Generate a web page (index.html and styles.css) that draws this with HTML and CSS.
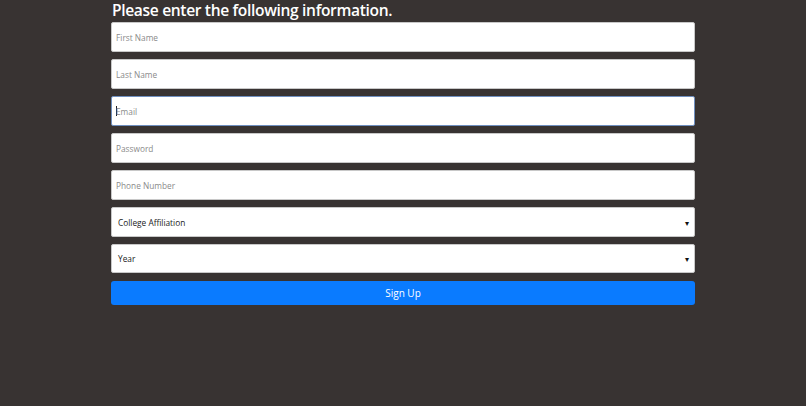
FILE: index.html
```html
<!DOCTYPE html>
<html lang="en">
<head>
<meta charset="utf-8">
<title>Sign Up</title>
<link rel="stylesheet" href="styles.css">
</head>
<body>
<main class="wrap">
  <h1 class="title">Please enter the following information.</h1>
  <form class="form">
    <div class="field"><span class="ph">First Name</span></div>
    <div class="field"><span class="ph">Last Name</span></div>
    <div class="field focused"><span class="caret"></span><span class="ph">Email</span></div>
    <div class="field"><span class="ph">Password</span></div>
    <div class="field"><span class="ph">Phone Number</span></div>
    <div class="field select"><span class="val">College Affiliation</span><span class="arrow">▾</span></div>
    <div class="field select short"><span class="val">Year</span><span class="arrow">▾</span></div>
    <button type="button" class="btn">Sign Up</button>
  </form>
</main>
</body>
</html>
```
FILE: styles.css
```css
html, body {
  margin: 0;
  padding: 0;
  background: #383332;
  height: 100%;
}
body {
  font-family: "Open Sans", "Noto Sans", sans-serif;
}
.wrap {
  width: 584px;
  margin: 0 auto;
}
.title {
  margin: 0 0 1px;
  padding-left: 1px;
  color: #ffffff;
  font-size: 15.6px;
  font-weight: 600;
  letter-spacing: -0.35px;
  line-height: 21px;
}
.form {
  display: flex;
  flex-direction: column;
  gap: 7px;
}
.field {
  box-sizing: border-box;
  height: 30px;
  background: #ffffff;
  border: 1px solid #c8c8c8;
  border-radius: 2px;
  display: flex;
  align-items: center;
  padding: 0 4px;
  font-size: 8.3px;
}
.field.focused {
  border-color: #6f8fbf;
}
.ph {
  color: #8a8a8a;
}
.caret {
  width: 1px;
  height: 10px;
  background: #222;
  margin-right: -1px;
}
.select {
  padding: 0 5px 0 6px;
  justify-content: space-between;
}
.select.short {
  height: 29px;
}
.val {
  color: #222;
}
.arrow {
  color: #111;
  font-size: 8px;
}
.btn {
  margin-top: 1px;
  height: 24px;
  border: 0;
  border-radius: 3px;
  background: #0a7bff;
  color: #ffffff;
  font-family: "Open Sans", "Noto Sans", sans-serif;
  font-size: 10px;
  padding: 0;
}
```
